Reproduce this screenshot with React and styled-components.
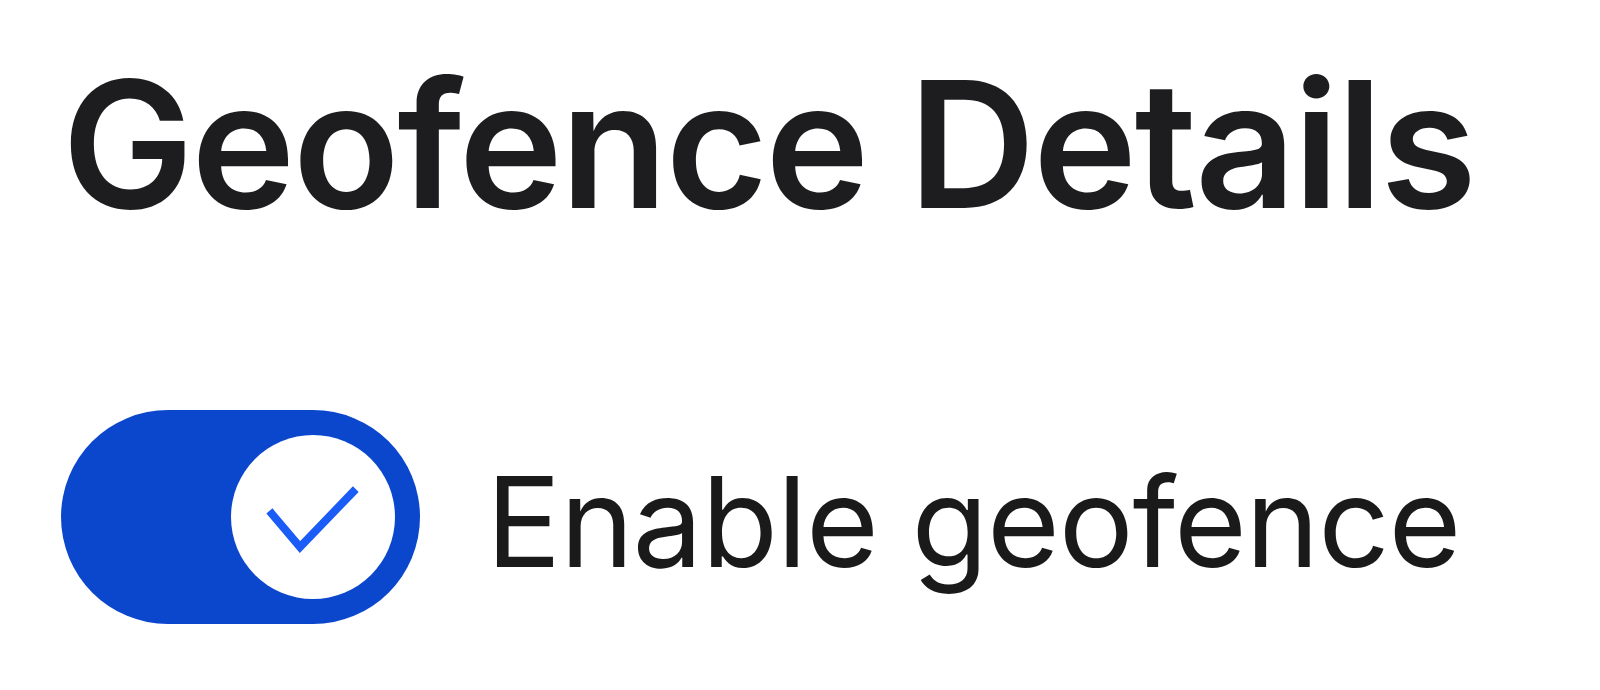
import React, { useState } from 'react';
import styled, { createGlobalStyle } from 'styled-components';

const GlobalStyle = createGlobalStyle`
  html, body {
    margin: 0;
    padding: 0;
    background: #ffffff;
  }
`;

const Page = styled.div`
  display: flex;
  flex-direction: column;
  align-items: flex-start;
  gap: 178px;
  padding: 56px 0 0 62px;
`;

const Heading = styled.h1`
  margin: 0;
  font-family: Inter, "Liberation Sans", sans-serif;
  font-weight: 600;
  font-size: 176px;
  line-height: 1;
  letter-spacing: -2.6px;
  color: #1d1d1f;
`;

const Row = styled.label`
  display: flex;
  align-items: center;
  gap: 66px;
  margin-left: -1px;
  cursor: pointer;
`;

const Track = styled.span`
  display: flex;
  align-items: center;
  justify-content: ${(p) => (p.$on ? 'flex-end' : 'flex-start')};
  box-sizing: border-box;
  width: 359px;
  height: 214px;
  padding: 0 25px;
  border-radius: 107px;
  background: ${(p) => (p.$on ? '#0b47cc' : '#c7c9ce')};
`;

const Knob = styled.span`
  display: flex;
  align-items: center;
  justify-content: center;
  width: 164px;
  height: 164px;
  border-radius: 50%;
  background: #ffffff;
`;

const Label = styled.span`
  margin-top: 8px;
  font-family: Inter, "Noto Sans", sans-serif;
  font-weight: 400;
  font-size: 125px;
  line-height: 1;
  letter-spacing: -1.2px;
  color: #1a1a1a;
`;

export default function App() {
  const [on, setOn] = useState(true);
  return (
    <>
      <GlobalStyle />
      <Page>
        <Heading>Geofence Details</Heading>
        <Row onClick={() => setOn(!on)}>
          <Track $on={on}>
            <Knob>
              {on && (
                <svg width="120" height="100" viewBox="0 0 120 100">
                  <path d="M19 47 L47 80 L100 25" fill="none" stroke="#1a5cf5" strokeWidth="8" strokeLinecap="square" strokeLinejoin="miter" />
                </svg>
              )}
            </Knob>
          </Track>
          <Label>Enable geofence</Label>
        </Row>
      </Page>
    </>
  );
}
